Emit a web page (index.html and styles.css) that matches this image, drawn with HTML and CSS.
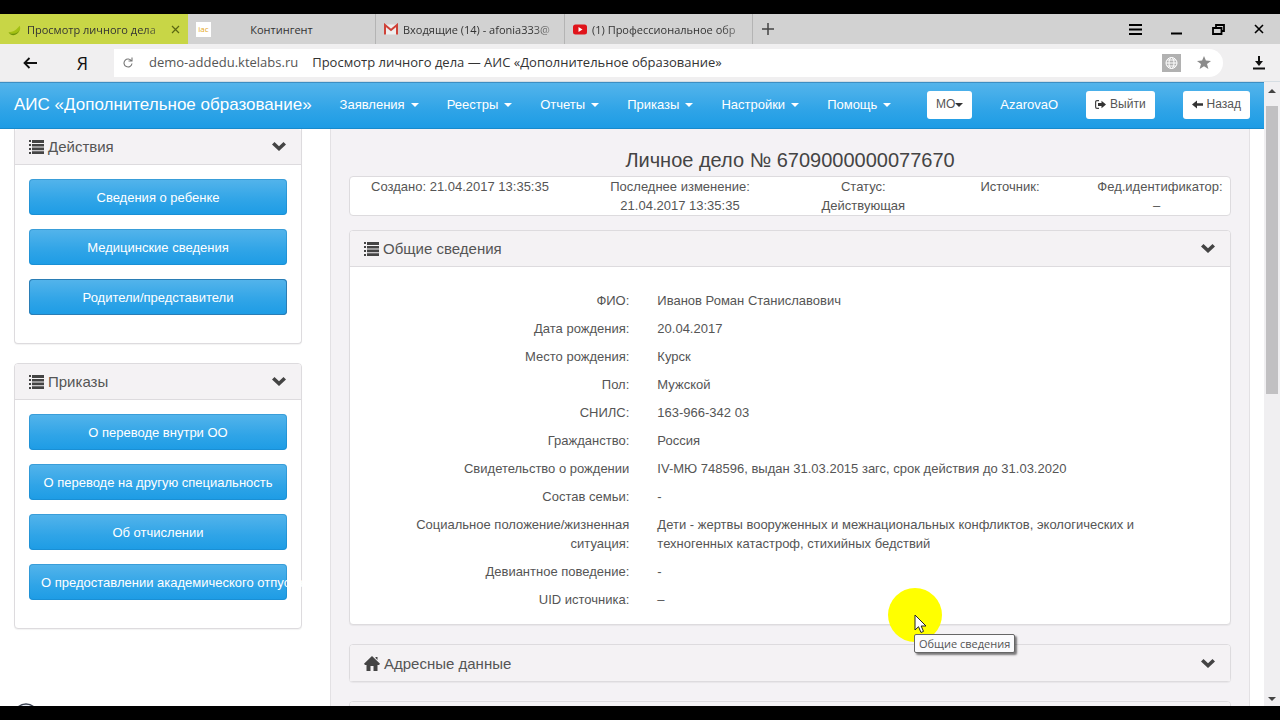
FILE: index.html
```
<!DOCTYPE html>
<html lang="ru">
<head>
<meta charset="utf-8">
<title>Просмотр личного дела — АИС «Дополнительное образование»</title>
<link rel="stylesheet" href="styles.css">
</head>
<body>
<svg class="defs" aria-hidden="true">
  <symbol id="list" viewBox="0 0 15 14"><path d="M0 0h2v2H0zM3 0h12v3H3zM0 4h2v2H0zM3 4h12v2.600H3zM0 8h2v2H0zM3 7.600h12v2.600H3zM0 12h2v2H0zM3 11.200h12V14H3z"/></symbol>
  <symbol id="chevron" viewBox="0 0 14 9"><path d="M0 2.500 2.500 0 7 4.200 11.500 0 14 2.500 7 9z"/></symbol>
  <symbol id="home" viewBox="0 0 16 15"><path d="M8 0 16 7.800 15 9H13.500V15H9.500V10H6.500V15H2.500V9H1L0 7.800zM11.500 1h2v3l-2-2z"/></symbol>
</svg>

<div class="browser">
  <div class="tabs">
    <div class="tab tab-active">
      <svg class="favicon" viewBox="0 0 14 14"><path d="M0 10C5 10 9 7 12 3c2 4-1 9-6 9-3 0-5-1-6-2z" fill="#a3c013"/><path d="M0 10c4 3 10 2 12-3-2 7-9 8-12 3z" fill="#6f930a"/></svg>
      <span class="tab-title fade">Просмотр личного дела</span>
      <button class="tab-close" aria-label="Закрыть вкладку"><svg viewBox="0 0 9 9"><path d="M1 1l7 7M8 1L1 8" stroke="#5b6812" stroke-width="1.200"/></svg></button>
    </div>
    <div class="tab tab-plain">
      <span class="iac">iac</span>
      <span class="tab-title centered">Контингент</span>
    </div>
    <div class="tab tab-mail">
      <svg class="favicon" viewBox="0 0 14 12"><path d="M1 1h12v10H1z" fill="#eee"/><path d="M1 11V1.500l6 5 6-5V11" fill="none" stroke="#cf4238" stroke-width="2"/></svg>
      <span class="tab-title fade">Входящие (14) - afonia333@</span>
    </div>
    <div class="tab tab-video">
      <svg class="favicon" viewBox="0 0 14 12"><rect y="1" width="14" height="10" rx="2.500" fill="#e0141b"/><path d="M5.500 3.500 9.500 6l-4 2.500z" fill="#fff"/></svg>
      <span class="tab-title fade">(1) Профессиональное обр</span>
    </div>
    <button class="new-tab" aria-label="Новая вкладка"><svg viewBox="0 0 12 12"><path d="M6 0v12M0 6h12" stroke="#444" stroke-width="1.500"/></svg></button>
    <div class="window-buttons">
      <button aria-label="Меню"><svg width="13" height="11" viewBox="0 0 13 11"><path d="M0 1h13M0 5.500h13M0 10h13" stroke="#000" stroke-width="2"/></svg></button>
      <button aria-label="Свернуть"><svg width="12" height="11" viewBox="0 0 12 11"><path d="M0 9.500h11" stroke="#000" stroke-width="2"/></svg></button>
      <button aria-label="Восстановить"><svg width="13" height="11" viewBox="0 0 13 11"><path d="M4 3.500V1h8v6H9.500M1 4h8.500v6H1z" fill="none" stroke="#000" stroke-width="1.800"/></svg></button>
      <button aria-label="Закрыть"><svg width="10" height="10" viewBox="0 0 10 10"><path d="M1 1l8 8M9 1L1 9" stroke="#000" stroke-width="1.600"/></svg></button>
    </div>
  </div>
  <div class="address">
    <button class="back" aria-label="Назад"><svg width="14" height="12" viewBox="0 0 14 12"><path d="M14 6H2M6.500 1 1.500 6l5 5" fill="none" stroke="#111" stroke-width="1.800"/></svg></button>
    <button class="yandex">Я</button>
    <div class="url">
      <svg width="10" height="11" viewBox="0 0 10 11"><path d="M8.500 4A4 4 0 1 0 9 6.500M5.500 4H9V.500" fill="none" stroke="#777" stroke-width="1.100"/></svg>
      <span class="host">demo-addedu.ktelabs.ru</span>
      <span class="page-name">Просмотр личного дела — АИС «Дополнительное образование»</span>
      <svg class="globe" width="19" height="18" viewBox="0 0 19 18"><rect width="19" height="18" fill="#b1b1b1"/><g fill="none" stroke="#fff"><circle cx="9.500" cy="9" r="5.500"/><ellipse cx="9.500" cy="9" rx="2.500" ry="5.500"/><path d="M4 9h11M5 6h9M5 12h9"/></g></svg>
      <svg class="star" width="14" height="13" viewBox="0 0 14 13"><path d="M7 0l1.900 4.600 5.100.300-4 3.200 1.400 4.900L7 10.300 2.600 13 4 8.100 0 4.900l5.100-.300z" fill="#8b8b8b"/></svg>
    </div>
    <button class="download" aria-label="Загрузки"><svg width="12" height="14" viewBox="0 0 12 14"><path d="M6 0v8M0 12.500h12" stroke="#111" stroke-width="2"/><path d="M2 5h8l-4 5z" fill="#111"/></svg></button>
  </div>
</div>

<div class="viewport">
  <div class="page">
    <nav class="navbar">
      <a class="brand" href="#">АИС «Дополнительное образование»</a>
      <a class="menu" href="#">Заявления</a>
      <a class="menu" href="#">Реестры</a>
      <a class="menu" href="#">Отчеты</a>
      <a class="menu" href="#">Приказы</a>
      <a class="menu" href="#">Настройки</a>
      <a class="menu" href="#">Помощь</a>
      <div class="nav-right">
        <button class="btn btn-mo">МО</button>
        <a class="user" href="#">AzarovaO</a>
        <button class="btn"><svg width="11" height="9" viewBox="0 0 11 9"><path d="M4 .600H2A1.400 1.400 0 0 0 .600 2v5A1.400 1.400 0 0 0 2 8.400h2" fill="none" stroke="#444" stroke-width="1.200"/><path d="M3 3h3.500V.800L11 4.500 6.500 8.200V6H3z" fill="#333"/></svg>Выйти</button>
        <button class="btn"><svg width="11" height="9" viewBox="0 0 11 9"><path d="M11 3.200H5V.500L0 4.500l5 4V5.800h6z" fill="#333"/></svg>Назад</button>
      </div>
    </nav>
    <div class="columns">
      <aside class="sidebar">
        <section class="panel panel-scrolled">
          <h2 class="panel-head"><svg class="list"><use href="#list"/></svg>Действия<svg class="chevron"><use href="#chevron"/></svg></h2>
          <div class="actions">
            <button class="action">Сведения о ребенке</button>
            <button class="action">Медицинские сведения</button>
            <button class="action action-focus">Родители/представители</button>
          </div>
        </section>
        <section class="panel">
          <h2 class="panel-head"><svg class="list"><use href="#list"/></svg>Приказы<svg class="chevron"><use href="#chevron"/></svg></h2>
          <div class="actions">
            <button class="action">О переводе внутри ОО</button>
            <button class="action">О переводе на другую специальность</button>
            <button class="action">Об отчислении</button>
            <button class="action">О предоставлении академического отпуска</button>
          </div>
        </section>
      </aside>
      <main class="content">
        <h1>Личное дело № 6709000000077670</h1>
        <div class="summary">
          <div>Создано: 21.04.2017 13:35:35</div>
          <div>Последнее изменение: <span class="date">21.04.2017 13:35:35</span></div>
          <div>Статус: Действующая</div>
          <div>Источник:</div>
          <div>Фед.идентификатор: –</div>
        </div>
        <section class="panel">
          <h2 class="panel-head"><svg class="list"><use href="#list"/></svg>Общие сведения<svg class="chevron"><use href="#chevron"/></svg></h2>
          <dl class="details">
            <dt>ФИО:</dt><dd>Иванов Роман Станиславович</dd>
            <dt>Дата рождения:</dt><dd>20.04.2017</dd>
            <dt>Место рождения:</dt><dd>Курск</dd>
            <dt>Пол:</dt><dd>Мужской</dd>
            <dt>СНИЛС:</dt><dd>163-966-342 03</dd>
            <dt>Гражданство:</dt><dd>Россия</dd>
            <dt>Свидетельство о рождении</dt><dd>IV-МЮ 748596, выдан 31.03.2015 загс, срок действия до 31.03.2020</dd>
            <dt>Состав семьи:</dt><dd>-</dd>
            <dt>Социальное положение/жизненная ситуация:</dt><dd>Дети - жертвы вооруженных и межнациональных конфликтов, экологических и техногенных катастроф, стихийных бедствий</dd>
            <dt>Девиантное поведение:</dt><dd>-</dd>
            <dt>UID источника:</dt><dd>–</dd>
          </dl>
        </section>
        <section class="panel panel-closed">
          <h2 class="panel-head"><svg class="home"><use href="#home"/></svg>Адресные данные<svg class="chevron"><use href="#chevron"/></svg></h2>
        </section>
        <section class="panel panel-closed"><div class="panel-head"></div></section>
      </main>
    </div>
  </div>
  <div class="scrollbar">
    <svg width="8" height="4" viewBox="0 0 8 4"><path d="M0 4l4-4 4 4z" fill="#444"/></svg>
    <div class="thumb"></div>
    <svg width="8" height="4" viewBox="0 0 8 4"><path d="M0 0h8L4 4z" fill="#444"/></svg>
  </div>
  <svg class="corner-badge" viewBox="0 0 26 26"><circle cx="13" cy="13" r="12" fill="#e9edf5" stroke="#39404f" stroke-width="1.500"/></svg>
</div>

<div class="pointer">
  <svg width="13" height="20" viewBox="0 0 13 20"><path d="M1 1v15l3.500-3.300L7 18.500l2.500-1.100L7.200 12H12z" fill="#fff" stroke="#222"/></svg>
  <div class="tooltip" role="tooltip">Общие сведения</div>
</div>
</body>
</html>
```
FILE: styles.css
```
* { box-sizing: border-box; }

body {
  display: flex;
  flex-direction: column;
  height: 100vh;
  margin: 0;
  padding: 14px 0;
  overflow: hidden;
  background: #000;
  color: #555;
  font: 13px/19px "Liberation Sans", Arial, sans-serif;
}

button {
  margin: 0;
  padding: 0;
  border: 0;
  background: none;
  font: inherit;
  color: inherit;
}

a { color: inherit; text-decoration: none; }
svg { display: block; flex: none; }
.defs { position: absolute; width: 0; height: 0; }

/* Browser frame */
.browser {
  font-family: "Open Sans", "Noto Sans", sans-serif;
  color: #333;
}

.tabs {
  display: flex;
  height: 30px;
  background: #d2d2d2;
  font-size: 11px;
}

.tab {
  display: flex;
  align-items: center;
  gap: 5px;
  padding: 0 8px;
  border-right: 1px solid #b4b4b4;
}

.tab-active { width: 188px; background: #c8d646; border-right: 0; }
.tab-plain { width: 188px; padding-right: 28px; }
.tab-mail { width: 189px; }
.tab-video { width: 188px; }
.favicon { width: 14px; height: 13px; }
.tab-title { flex: 1; white-space: nowrap; }
.centered { text-align: center; }
.fade {
  -webkit-mask-image: linear-gradient(to right, #000 84%, rgba(0, 0, 0, .3));
  mask-image: linear-gradient(to right, #000 84%, rgba(0, 0, 0, .3));
}
.tab-close svg { width: 9px; height: 9px; }

.iac {
  width: 15px;
  height: 15px;
  background: #fff;
  color: #e5a823;
  font-size: 8px;
  line-height: 13px;
  text-align: center;
}

.new-tab { width: 30px; display: grid; place-items: center; }
.new-tab svg { width: 12px; height: 12px; }

.window-buttons {
  display: flex;
  align-items: center;
  gap: 29px;
  margin-left: auto;
  padding-right: 16px;
}

.address {
  display: flex;
  align-items: center;
  height: 38px;
  background: #f0eff0;
  border-bottom: 1px solid #d5dde3;
  font-size: 13px;
}

.back { margin-left: 23px; }
.yandex { width: 77px; padding-left: 14px; font: 18px "Open Sans", sans-serif; color: #111; }

.url {
  display: flex;
  flex: 1;
  align-items: center;
  height: 28px;
  padding: 0 12px 0 9px;
  background: #fff;
  border-radius: 0 14px 14px 0;
}

.host { margin-left: 16px; color: #555; }
.page-name { margin-left: 14px; white-space: nowrap; }
.globe { margin-left: auto; }
.star { margin-left: 16px; }
.download { width: 57px; padding-left: 30px; }

/* Page */
.viewport {
  position: relative;
  display: flex;
  flex: 1;
  min-height: 0;
  overflow: hidden;
  background: #fff;
}

.page {
  display: flex;
  flex: 1;
  flex-direction: column;
  min-width: 0;
}

.navbar {
  display: flex;
  flex: none;
  align-items: center;
  gap: 28px;
  height: 47px;
  padding: 0 14px 2px;
  background: linear-gradient(#54b4eb, #2fa4e7 60%, #1d9ce5);
  border-top: 1px solid #3d8ec3;
  border-bottom: 1px solid #178acc;
  color: #fff;
  white-space: nowrap;
}

.brand { font-size: 17px; }
.menu, .btn-mo { display: flex; align-items: center; gap: 6px; }
.menu::after, .btn-mo::after {
  content: "";
  border: 4px solid transparent;
  border-top-color: currentColor;
  border-bottom: 0;
}

.nav-right {
  display: flex;
  align-items: center;
  gap: 28px;
  margin-left: auto;
}

.btn {
  display: flex;
  align-items: center;
  justify-content: center;
  gap: 4px;
  height: 28px;
  padding: 0 9px;
  background: #fff;
  border-radius: 3px;
  color: #555;
  font-size: 12px;
}
.btn-mo { gap: 0; }
.btn-mo::after { color: #333; }

.columns {
  display: flex;
  flex: 1;
  gap: 28px;
  min-height: 0;
  padding: 0 14px;
  overflow: hidden;
}

.sidebar { flex: none; width: 288px; }

.content {
  flex: 1;
  min-width: 0;
  padding: 0 18px;
  background: #f4f2f5;
  border: 1px solid #e3e1e4;
  border-width: 0 1px;
}

h1 {
  margin: 0;
  padding: 20px 0 4px;
  color: #444;
  font-size: 20px;
  font-weight: normal;
  line-height: 23px;
  text-align: center;
}

.panel {
  margin-bottom: 19px;
  background: #fff;
  border: 1px solid #dddbde;
  border-radius: 4px;
  box-shadow: 0 1px 1px rgba(0, 0, 0, .05);
}

.panel-scrolled { border-top: 0; border-radius: 0 0 4px 4px; }

.panel-head {
  display: flex;
  align-items: center;
  gap: 4px;
  height: 36px;
  margin: 0;
  padding: 0 15px 0 14px;
  background: #f4f2f4;
  border-bottom: 1px solid #dddbde;
  border-radius: 3px 3px 0 0;
  font-size: 15px;
  font-weight: normal;
  fill: #444;
}

.panel-closed .panel-head { border-bottom: 0; }
.list { width: 15px; height: 14px; }
.home { width: 16px; height: 15px; }
.chevron { width: 14px; height: 9px; margin-left: auto; }

.actions {
  display: flex;
  flex-direction: column;
  gap: 14px;
  padding: 14px 14px 28px;
}

.action {
  height: 36px;
  padding: 0 12px;
  background: linear-gradient(#54b4eb, #2fa4e7 60%, #1d9ce5);
  border-radius: 4px;
  box-shadow: inset 0 0 0 1px rgba(20, 125, 190, .4);
  color: #fff;
  text-align: center;
  white-space: nowrap;
}

.action-focus { box-shadow: inset 0 0 0 1px #2a7db5; }

.summary {
  display: grid;
  grid-template-columns: 3fr 3fr 2fr 2fr 2fr;
  margin-bottom: 14px;
  background: #fff;
  border: 1px solid #dddbde;
  border-radius: 4px;
  text-align: center;
}
.summary div { min-width: 0; padding: 0 14px; }
.date { white-space: nowrap; }

.details {
  display: grid;
  grid-template-columns: 1fr 2fr;
  row-gap: 9px;
  margin: 0;
  padding: 24px 0 15px;
}
.details dt { padding: 0 14px; text-align: right; }
.details dd { margin: 0; padding: 0 64px 0 14px; }

.scrollbar {
  display: flex;
  flex: none;
  flex-direction: column;
  align-items: center;
  width: 16px;
  padding: 7px 0 5px;
  background: #f0eff1;
}
.thumb { width: 12px; height: 47%; margin: 13px 0 auto; background: #c1c0c2; }

.corner-badge { position: absolute; left: 13px; bottom: -23px; width: 26px; height: 26px; }

/* Mouse highlight and its tooltip, floating over the page */
.pointer {
  position: absolute;
  left: 888px;
  top: 588px;
  width: 54px;
  height: 54px;
  padding: 26px;
  background: #ff0;
  border-radius: 50%;
}

.tooltip {
  position: absolute;
  left: 26px;
  top: 46px;
  padding: 0 4px;
  background: #fbfbfd;
  border: 1px solid #666;
  border-radius: 2px;
  box-shadow: 2px 2px 2px rgba(0, 0, 0, .5);
  font: 11px/17px "Open Sans", "Noto Sans", sans-serif;
  white-space: nowrap;
}
```
